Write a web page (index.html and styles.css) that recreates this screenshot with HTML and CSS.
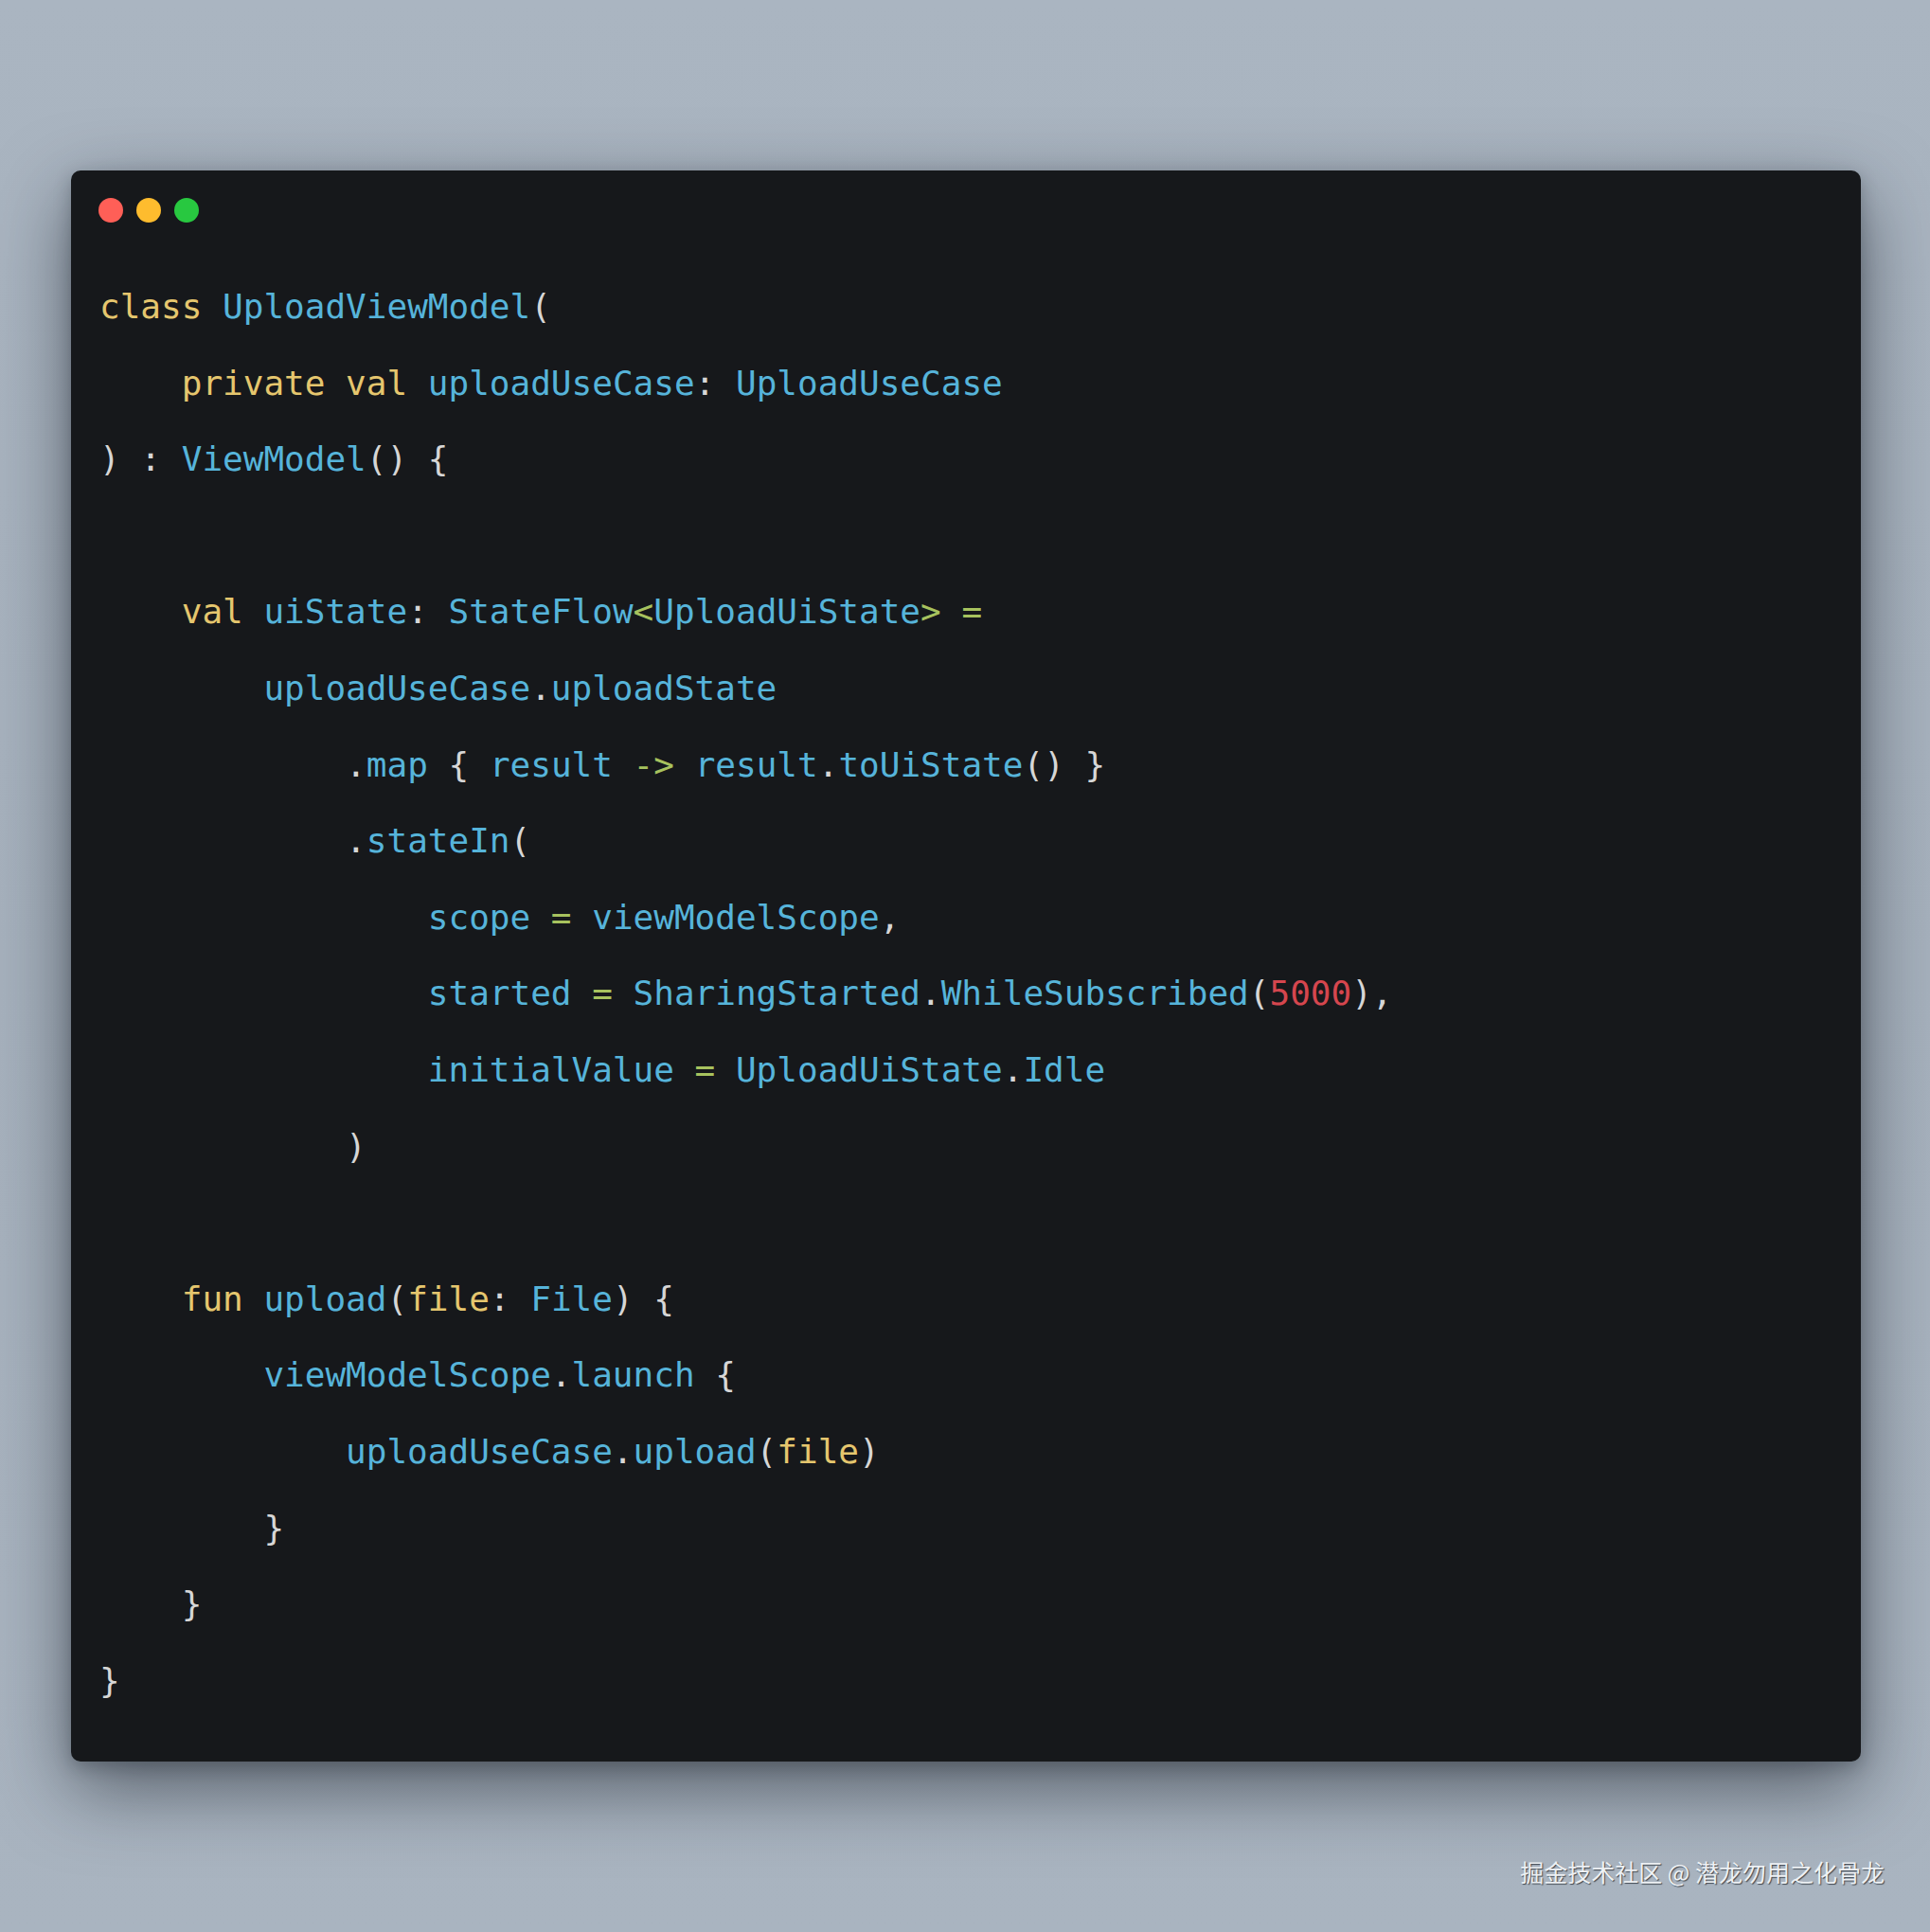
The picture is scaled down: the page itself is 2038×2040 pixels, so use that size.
FILE: index.html
```html
<!DOCTYPE html>
<html lang="zh">
<head>
<meta charset="utf-8">
<title>UploadViewModel</title>
<link rel="stylesheet" href="styles.css">
</head>
<body>
<div class="page">
  <div class="window">
    <div class="dots">
      <span class="dot red"></span>
      <span class="dot yellow"></span>
      <span class="dot green"></span>
    </div>
<pre class="code"><span class="k">class</span> <span class="i">UploadViewModel</span><span class="p">(</span>
    <span class="k">private</span> <span class="k">val</span> <span class="i">uploadUseCase</span><span class="p">:</span> <span class="i">UploadUseCase</span>
<span class="p">) :</span> <span class="i">ViewModel</span><span class="p">() {</span>

    <span class="k">val</span> <span class="i">uiState</span><span class="p">:</span> <span class="i">StateFlow</span><span class="o">&lt;</span><span class="i">UploadUiState</span><span class="o">&gt; =</span>
        <span class="i">uploadUseCase</span><span class="p">.</span><span class="i">uploadState</span>
            <span class="p">.</span><span class="i">map</span> <span class="p">{</span> <span class="i">result</span> <span class="o">-&gt;</span> <span class="i">result</span><span class="p">.</span><span class="i">toUiState</span><span class="p">() }</span>
            <span class="p">.</span><span class="i">stateIn</span><span class="p">(</span>
                <span class="i">scope</span> <span class="o">=</span> <span class="i">viewModelScope</span><span class="p">,</span>
                <span class="i">started</span> <span class="o">=</span> <span class="i">SharingStarted</span><span class="p">.</span><span class="i">WhileSubscribed</span><span class="p">(</span><span class="n">5000</span><span class="p">),</span>
                <span class="i">initialValue</span> <span class="o">=</span> <span class="i">UploadUiState</span><span class="p">.</span><span class="i">Idle</span>
            <span class="p">)</span>

    <span class="k">fun</span> <span class="i">upload</span><span class="p">(</span><span class="k">file</span><span class="p">:</span> <span class="i">File</span><span class="p">) {</span>
        <span class="i">viewModelScope</span><span class="p">.</span><span class="i">launch</span> <span class="p">{</span>
            <span class="i">uploadUseCase</span><span class="p">.</span><span class="i">upload</span><span class="p">(</span><span class="k">file</span><span class="p">)</span>
        <span class="p">}</span>
    <span class="p">}</span>
<span class="p">}</span></pre>
  </div>
  <div class="watermark">掘金技术社区 @ 潜龙勿用之化骨龙</div>
</div>
</body>
</html>
```

FILE: styles.css
```css
html, body {
  margin: 0;
  padding: 0;
}
body {
  width: 2038px;
  height: 2040px;
  overflow: hidden;
  background: linear-gradient(180deg, #aab5c1 0%, #a6b1bd 50%, #a9b4c0 100%);
}
.page {
  display: flex;
  flex-direction: column;
  padding: 180px 0 0 75px;
}
.window {
  width: 1890px;
  height: 1680px;
  box-sizing: border-box;
  background: #16181b;
  border-radius: 10px;
  padding: 29px 30px 0 29px;
  box-shadow: 0 28px 80px rgba(20, 26, 34, 0.55), 0 6px 18px rgba(20, 26, 34, 0.25);
}
.dots {
  display: flex;
  gap: 14px;
  height: 26px;
}
.dot {
  width: 26px;
  height: 26px;
  border-radius: 50%;
}
.red { background: #ff5f57; }
.yellow { background: #febc2e; }
.green { background: #28c840; }
.code {
  margin: 49px 0 0 1px;
  font-family: "DejaVu Sans Mono", monospace;
  font-size: 36px;
  line-height: 80.6px;
  color: #d6d6d6;
  white-space: pre;
}
.k { color: #e5c66e; }
.i { color: #56b4da; }
.p { color: #d6d6d6; }
.o { color: #a7c25e; }
.n { color: #d5464e; }
.watermark {
  margin-top: 101px;
  align-self: flex-end;
  margin-right: 48px;
  font-family: "Noto Sans CJK SC", "Noto Sans", sans-serif;
  font-size: 25px;
  line-height: 30px;
  color: #eef1f4;
  text-shadow: 1px 1px 1px rgba(30, 36, 44, 0.75);
}
```
